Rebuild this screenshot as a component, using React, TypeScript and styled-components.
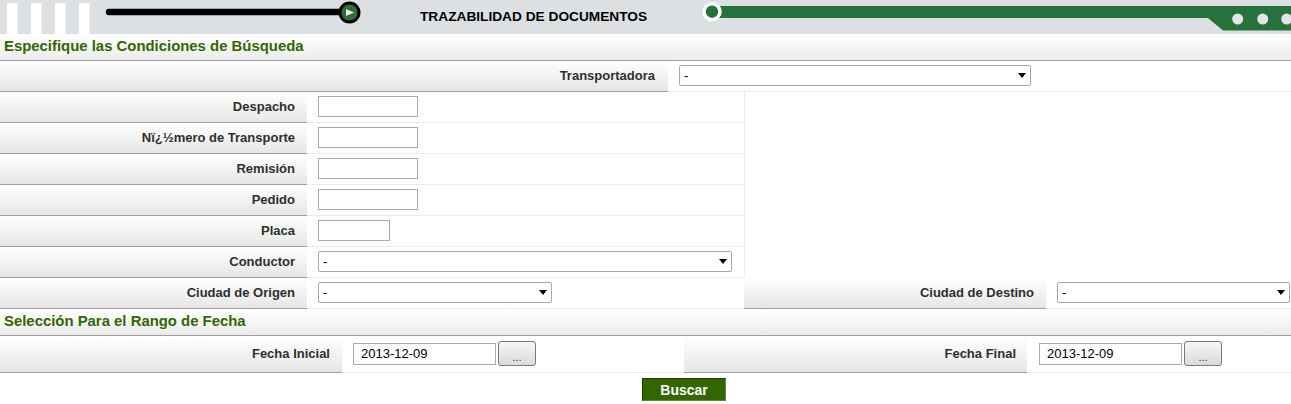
import React from 'react';
import styled, { createGlobalStyle } from 'styled-components';

const Global = createGlobalStyle`
  html, body { margin: 0; padding: 0; background: #fff; }
  body {
    font-family: "Liberation Sans", Arial, sans-serif;
    font-size: 13px;
    color: #333;
  }
  * { box-sizing: border-box; }
`;

const Header = styled.header`
  display: grid;
  grid-template-columns: 420px 226px 1fr;
  align-items: center;
  height: 34px;
  background: #dde0e3;
  overflow: hidden;
`;

const Banner = styled.svg`
  display: block;
`;

const Title = styled.h1`
  margin: 0;
  font-size: 13.7px;
  font-weight: bold;
  color: #000;
  white-space: nowrap;
  line-height: 32px;
`;

const SectionTitle = styled.div`
  height: 27px;
  line-height: 25px;
  padding-left: 4px;
  background: linear-gradient(#ffffff, #ececec);
  border-bottom: 1px solid #a0a0a0;
  color: #336600;
  font-weight: bold;
  font-size: 14.9px;
  white-space: nowrap;
`;

const Grid = styled.div<{ $cols: string; $row: number }>`
  display: grid;
  grid-template-columns: ${(p) => p.$cols};
  grid-auto-rows: ${(p) => p.$row}px;
`;

const Label = styled.div<{ $pad?: number }>`
  display: flex;
  align-items: center;
  justify-content: flex-end;
  padding-right: ${(p) => p.$pad ?? 12}px;
  padding-bottom: 1px;
  background: linear-gradient(#ffffff, #e6e6e6);
  border-bottom: 1px solid #a0a0a0;
  font-weight: bold;
  font-size: 13px;
  color: #2f2f2f;
  white-space: nowrap;
`;

const Field = styled.div<{ $pad?: number }>`
  display: flex;
  align-items: center;
  gap: 2px;
  padding-left: ${(p) => p.$pad ?? 11}px;
  padding-bottom: 1px;
  border-bottom: 1px solid #ececec;
`;

const Blank = styled.div`
  grid-column: 3 / 5;
  grid-row: 1 / 7;
  border-left: 1px solid #ececec;
`;

const TextInput = styled.input<{ $w: number; $h?: number }>`
  width: ${(p) => p.$w}px;
  height: ${(p) => p.$h ?? 21}px;
  border: 1px solid #ababab;
  background: #fff;
  padding: 0 0 0 7px;
  font: 13px "Liberation Sans", Arial, sans-serif;
  color: #000;
  outline: none;
`;

const SelectWrap = styled.span<{ $w: number }>`
  position: relative;
  display: inline-block;
  width: ${(p) => p.$w}px;
  height: 21px;
  &::after {
    content: '';
    position: absolute;
    right: 5px;
    top: 8px;
    border-left: 4px solid transparent;
    border-right: 4px solid transparent;
    border-top: 5px solid #000;
    pointer-events: none;
  }
`;

const Select = styled.select`
  appearance: none;
  -webkit-appearance: none;
  width: 100%;
  height: 100%;
  border: 1px solid #a9a9a9;
  border-radius: 2px;
  background: #fff;
  padding: 0 0 0 4px;
  font: 13px "Liberation Sans", Arial, sans-serif;
  color: #000;
  outline: none;
`;

const DotsButton = styled.button`
  width: 38px;
  height: 25px;
  border: 1px solid #7a7a7a;
  border-radius: 3px;
  background: linear-gradient(#f6f6f6, #dadada);
  font: 11px "Liberation Sans", Arial, sans-serif;
  color: #333;
  padding: 6px 0 0;
  line-height: 14px;
`;

const Actions = styled.div`
  padding: 5px 0 0 642px;
`;

const Submit = styled.button`
  width: 84px;
  height: 23px;
  background: #336600;
  border: 1px solid #1c3d00;
  border-right-color: #5a8a3a;
  border-bottom-color: #5a8a3a;
  color: #fff;
  font: bold 14px "Liberation Sans", Arial, sans-serif;
  padding: 0;
`;

const Drop = ({ w }: { w: number }) => (
  <SelectWrap $w={w}>
    <Select defaultValue="-">
      <option value="-">-</option>
    </Select>
  </SelectWrap>
);

export default function App() {
  const textRows: [string, number][] = [
    ['Despacho', 100],
    ['Nï¿½mero de Transporte', 100],
    ['Remisión', 100],
    ['Pedido', 100],
    ['Placa', 72],
  ];
  return (
    <>
      <Global />
      <Header>
        <Banner width="420" height="34" viewBox="0 0 420 34">
          {[7, 31, 55, 79].map((x) => (
            <rect key={x} x={x} y={3} width={10.5} height={31} fill="#fff" />
          ))}
          <line x1="109" y1="12" x2="344" y2="12" stroke="#000" strokeWidth="6.5" strokeLinecap="round" />
          <circle cx="349.5" cy="12.5" r="9.5" fill="#2f6e3a" stroke="#000" strokeWidth="3" />
          <path d="M346 9 L354 12.5 L346 16 Z" fill="#e8ece8" />
        </Banner>
        <Title>TRAZABILIDAD DE DOCUMENTOS</Title>
        <Banner width="100%" height="34" viewBox="0 0 645 34" preserveAspectRatio="none">
          <polygon points="70,6 645,6 645,30.5 577,30.5 562,18 70,18" fill="#27713b" />
          <circle cx="66" cy="11.7" r="8" fill="#27713b" stroke="#fff" strokeWidth="3.5" />
          {[591.7, 616.7, 640.7].map((cx) => (
            <circle key={cx} cx={cx} cy={19} r={5.5} fill="#e2e5e8" />
          ))}
        </Banner>
      </Header>

      <SectionTitle>Especifique las Condiciones de Búsqueda</SectionTitle>

      <Grid $cols="668px 1fr" $row={31}>
        <Label $pad={13}>Transportadora</Label>
        <Field>
          <Drop w={352} />
        </Field>
      </Grid>

      <Grid $cols="307px 437px 302px 1fr" $row={31}>
        {textRows.map(([label, w], i) => (
          <React.Fragment key={label}>
            <Label style={{ gridRow: i + 1, gridColumn: 1 }}>{label}</Label>
            <Field style={{ gridRow: i + 1, gridColumn: 2 }}>
              <TextInput $w={w} />
            </Field>
          </React.Fragment>
        ))}
        <Label style={{ gridRow: 6, gridColumn: 1 }}>Conductor</Label>
        <Field style={{ gridRow: 6, gridColumn: 2 }}>
          <Drop w={414} />
        </Field>
        <Blank />
        <Label>Ciudad de Origen</Label>
        <Field>
          <Drop w={234} />
        </Field>
        <Label>Ciudad de Destino</Label>
        <Field>
          <Drop w={233} />
        </Field>
      </Grid>

      <SectionTitle>Selección Para el Rango de Fecha</SectionTitle>

      <Grid $cols="342px 342px 343px 1fr" $row={37}>
        <Label>Fecha Inicial</Label>
        <Field>
          <TextInput $w={143} $h={22} defaultValue="2013-12-09" />
          <DotsButton>...</DotsButton>
        </Field>
        <Label $pad={11}>Fecha Final</Label>
        <Field $pad={12}>
          <TextInput $w={143} $h={22} defaultValue="2013-12-09" />
          <DotsButton>...</DotsButton>
        </Field>
      </Grid>

      <Actions>
        <Submit>Buscar</Submit>
      </Actions>
    </>
  );
}
